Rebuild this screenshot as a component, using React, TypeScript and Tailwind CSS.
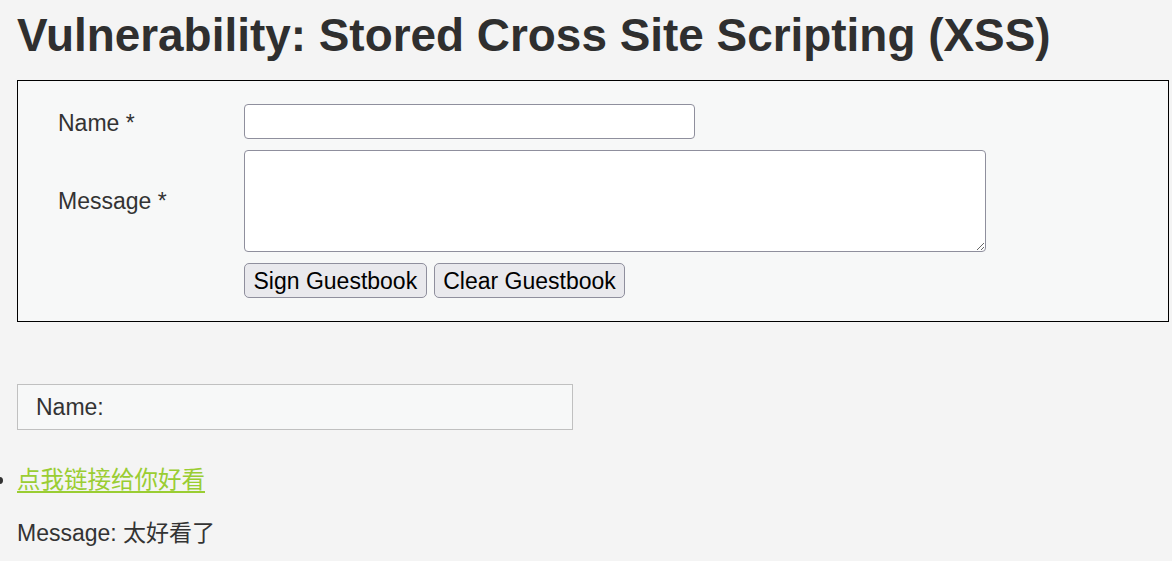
export default function App() {
  return (
    <div
      className="min-h-[561px] bg-[#f4f4f4] pl-[17px] pr-[3px] text-[23px] text-[#333333]"
      style={{ fontFamily: '"Liberation Sans", Arial, "Noto Sans CJK SC", sans-serif' }}
    >
      <h1 className="pt-[9px] text-[45.9px] font-bold leading-[52px] text-[#2f2f2f]">
        Vulnerability: Stored Cross Site Scripting (XSS)
      </h1>

      {/* Guestbook form */}
      <div className="mt-[19px] border border-black bg-[#f7f8f8] pb-[23px] pl-[40px] pt-[23px]">
        <div className="grid grid-cols-[186px_1fr] gap-y-[11px]">
          <label className="flex items-center pt-[2px] leading-[26px]">Name *</label>
          <input
            type="text"
            className="h-[35px] w-[451px] rounded-[4px] border border-[#8f8f9d] bg-white px-1 outline-none"
          />

          <label className="flex items-center leading-[26px]">Message *</label>
          <textarea className="h-[102px] w-[742px] rounded-[4px] border border-[#8f8f9d] bg-white outline-none" />

          <div />
          <div className="flex gap-[7px]">
            <button className="h-[35px] rounded-[5px] border border-[#8f8f9d] bg-[#e9e9ed] px-[8.5px] text-black">
              Sign Guestbook
            </button>
            <button className="h-[35px] rounded-[5px] border border-[#8f8f9d] bg-[#e9e9ed] px-[8.5px] text-black">
              Clear Guestbook
            </button>
          </div>
        </div>
      </div>

      {/* Stored entries */}
      <div className="mt-[62px] flex h-[46px] w-[556px] items-center border border-[#c0c0c0] bg-[#f7f8f8] pl-[18px]">
        Name:
      </div>

      <ul className="mt-[36px] list-disc">
        <li className="leading-[28px]">
          <a
            href="#"
            className="text-[23.5px] text-[#9acd32] underline decoration-2 underline-offset-[3px]"
          >
            点我链接给你好看
          </a>
        </li>
      </ul>
      <p className="mt-[25px] leading-[28px]">Message: 太好看了</p>
    </div>
  );
}
